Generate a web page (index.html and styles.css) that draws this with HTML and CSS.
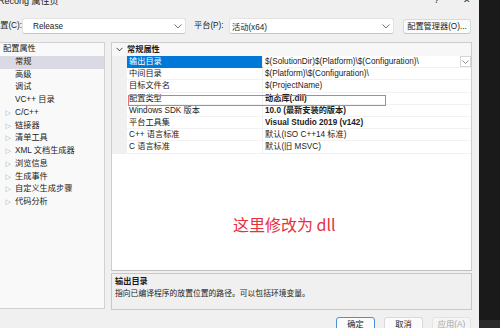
FILE: index.html
```html
<!DOCTYPE html>
<html lang="zh-CN">
<head>
<meta charset="utf-8">
<title>Recong 属性页</title>
<link rel="stylesheet" href="styles.css">
</head>
<body>
<div class="dialog">
  <div class="titlebar">
    <span class="title">Recong 属性页</span>
    <span class="tb-help">?</span>
    <span class="tb-close">✕</span>
  </div>
  <div class="toolbar">
    <span class="lbl lbl-cfg">配置(C):</span>
    <div class="combo combo-cfg"><span>Release</span><svg class="chev" width="8" height="5" viewBox="0 0 8 5"><path d="M0.5 0.5 L4 4 L7.5 0.5" fill="none" stroke="#606060" stroke-width="0.9"/></svg></div>
    <span class="lbl lbl-plat">平台(P):</span>
    <div class="combo combo-plat"><span>活动(x64)</span><svg class="chev" width="8" height="5" viewBox="0 0 8 5"><path d="M0.5 0.5 L4 4 L7.5 0.5" fill="none" stroke="#606060" stroke-width="0.9"/></svg></div>
    <button class="btn btn-mgr">配置管理器(O)...</button>
  </div>
  <div class="main">
    <div class="tree">
      <div class="ti root">配置属性</div>
      <div class="ti child sel">常规</div>
      <div class="ti child">高级</div>
      <div class="ti child">调试</div>
      <div class="ti child">VC++ 目录</div>
      <div class="ti exp"><span class="tri">▷</span>C/C++</div>
      <div class="ti exp"><span class="tri">▷</span>链接器</div>
      <div class="ti exp"><span class="tri">▷</span>清单工具</div>
      <div class="ti exp"><span class="tri">▷</span>XML 文档生成器</div>
      <div class="ti exp"><span class="tri">▷</span>浏览信息</div>
      <div class="ti exp"><span class="tri">▷</span>生成事件</div>
      <div class="ti exp"><span class="tri">▷</span>自定义生成步骤</div>
      <div class="ti exp"><span class="tri">▷</span>代码分析</div>
    </div>
    <div class="rightcol">
      <div class="grid">
        <div class="ghead">
          <div class="gut"><svg width="7" height="5" viewBox="0 0 7 5"><path d="M0.5 0.8 L3.5 3.8 L6.5 0.8" fill="none" stroke="#333" stroke-width="0.9"/></svg></div>
          <div class="hname">常规属性</div>
        </div>
        <div class="prow selrow"><div class="gut"></div><div class="pname">输出目录</div><div class="pval">$(SolutionDir)$(Platform)\$(Configuration)\<span class="ddbtn"><svg width="7" height="4" viewBox="0 0 7 4"><path d="M0.5 0.5 L3.5 3.5 L6.5 0.5" fill="none" stroke="#707070" stroke-width="0.8"/></svg></span></div></div>
        <div class="prow"><div class="gut"></div><div class="pname">中间目录</div><div class="pval">$(Platform)\$(Configuration)\</div></div>
        <div class="prow"><div class="gut"></div><div class="pname">目标文件名</div><div class="pval">$(ProjectName)</div></div>
        <div class="prow"><div class="gut"></div><div class="pname">配置类型</div><div class="pval b">动态库(.dll)</div></div>
        <div class="prow"><div class="gut"></div><div class="pname">Windows SDK 版本</div><div class="pval b">10.0 (最新安装的版本)</div></div>
        <div class="prow"><div class="gut"></div><div class="pname">平台工具集</div><div class="pval b">Visual Studio 2019 (v142)</div></div>
        <div class="prow"><div class="gut"></div><div class="pname">C++ 语言标准</div><div class="pval">默认(ISO C++14 标准)</div></div>
        <div class="prow"><div class="gut"></div><div class="pname">C 语言标准</div><div class="pval">默认(旧 MSVC)</div></div>
        <div class="redbox"></div>
        <div class="note">这里修改为 dll</div>
      </div>
      <div class="desc">
        <div class="dtitle">输出目录</div>
        <div class="dtext">指向已编译程序的放置位置的路径。可以包括环境变量。</div>
      </div>
    </div>
  </div>
  <div class="buttons">
    <button class="btn bb ok">确定</button>
    <button class="btn bb">取消</button>
    <button class="btn bb dis">应用(A)</button>
  </div>
</div>
</body>
</html>
```
FILE: styles.css
```css
* { box-sizing: border-box; }
html, body { margin: 0; padding: 0; }
body {
  width: 500px;
  height: 328px;
  overflow: hidden;
  background: linear-gradient(#1a1a1a 0, #1a1a1a 320px, #2b2b2b 320px);
  font-family: "Liberation Sans", "Noto Sans CJK SC", sans-serif;
  font-size: 8.2px;
  color: #1b1b1b;
}
.dialog {
  width: 479px;
  height: 328px;
  background: #f0f0f0;
  overflow: hidden;
}
.titlebar {
  height: 10px;
  overflow: hidden;
  display: flex;
  font-size: 9px;
  line-height: 10px;
}
.title { margin-top: -4px; margin-left: -2px; }
.tb-help { margin-top: -5px; margin-left: auto; width: 6px; }
.tb-close { margin-top: -5px; margin-left: 23px; margin-right: 8px; font-size: 9px; }
.toolbar {
  margin-top: 8px;
  height: 16px;
  display: flex;
  align-items: center;
}
.lbl { white-space: nowrap; line-height: 16px; }
.lbl-cfg { margin-left: -8px; width: 30px; }
.combo {
  height: 16px;
  background: #fff;
  border: 1px solid #e3e3e3;
  border-bottom-color: #c4c4c4;
  border-radius: 3px;
  display: flex;
  align-items: center;
  justify-content: space-between;
  padding: 0 3px 0 10px;
}
.combo-cfg { width: 164px; }
.lbl-plat { margin-left: 8px; width: 35px; }
.combo-plat { width: 165px; padding-left: 2px; padding-right: 3px; }
.btn {
  font-family: inherit;
  font-size: 8.2px;
  color: #1b1b1b;
  background: #fbfbfb;
  border: 1px solid #d9d9d9;
  border-bottom-color: #c6c6c6;
  border-radius: 3px;
  padding: 0;
  line-height: 13px;
}
.btn-mgr { margin-left: 9px; width: 68px; height: 15px; }
.main {
  margin-top: 8px;
  display: flex;
  gap: 6px;
  align-items: flex-start;
}
.tree {
  margin-left: -1px;
  width: 106px;
  height: 267px;
  background: #f9f9f9;
  border: 1px solid #d2d2d2;
}
.ti {
  height: 12.75px;
  line-height: 12.75px;
  white-space: nowrap;
  display: flex;
  align-items: center;
}
.root { padding-left: 3px; }
.child { padding-left: 15px; }
.exp { padding-left: 5px; }
.sel { background: #dadae4; }
.tri { font-size: 6px; color: #555; width: 10px; }
.rightcol {
  width: 361px;
  display: flex;
  flex-direction: column;
  gap: 2px;
}
.grid {
  position: relative;
  height: 229px;
  background: #fff;
  border: 1px solid #cdcdcd;
  border-bottom-color: #bdbdbd;
}
.ghead {
  height: 13px;
  display: flex;
  align-items: center;
  background: #f7f7f7;
}
.ghead .gut { width: 15px; height: 13px; display: flex; align-items: center; justify-content: center; }
.hname { font-weight: bold; line-height: 13px; }
.prow {
  height: 12.2px;
  display: grid;
  grid-template-columns: 15px 136px 1fr;
  line-height: 12px;
  white-space: nowrap;
}
.prow .gut { background: #f0f0f0; }
.pname {
  padding-left: 2px;
  border-bottom: 1px solid #f2f2f2;
  border-right: 1px solid #efefef;
  overflow: hidden;
}
.pval {
  padding-left: 2px;
  border-bottom: 1px solid #f2f2f2;
  position: relative;
  overflow: hidden;
}
.b { font-weight: bold; }
.selrow .pname { background: #0078d7; color: #fff; border-bottom-color: #0078d7; }
.ddbtn {
  position: absolute;
  right: 0;
  top: 0;
  width: 11px;
  height: 11px;
  border: 1px solid #d5d5d5;
  background: #fff;
  display: flex;
  align-items: center;
  justify-content: center;
}
.redbox {
  position: absolute;
  left: 16px;
  top: 52px;
  width: 258px;
  height: 11px;
  border: 1px solid #e8707a;
}
.note {
  position: absolute;
  left: 121px;
  top: 171px;
  font-size: 16px;
  line-height: 20px;
  color: #e8303e;
  font-family: "Noto Sans CJK SC", sans-serif;
  white-space: nowrap;
}
.desc {
  height: 37px;
  border: 1px solid #c8c8c8;
  background: #f0f0f0;
  padding: 2px 3px 0;
  line-height: 11.5px;
}
.dtitle { font-weight: bold; }
.dtext { font-size: 7.8px; }
.buttons {
  margin-top: 7px;
  display: flex;
  justify-content: flex-end;
  gap: 9px;
  padding-right: 8px;
}
.bb { width: 39px; height: 15px; }
.ok { border: 1px solid #4a90d8; }
.dis { color: #a5a5a5; background: #f5f5f5; border-color: #e3e3e3; }
```
